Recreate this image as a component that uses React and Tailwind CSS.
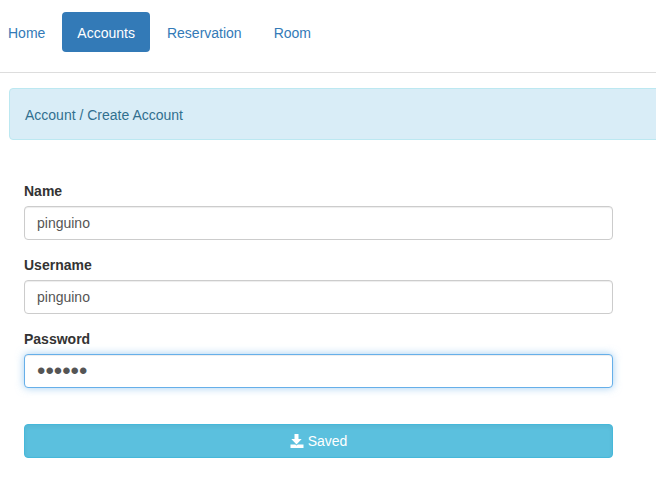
const nav = ['Home', 'Accounts', 'Reservation', 'Room'];

const fields = [
  { id: 'name', label: 'Name', type: 'text', value: 'pinguino' },
  { id: 'username', label: 'Username', type: 'text', value: 'pinguino' },
  { id: 'password', label: 'Password', type: 'password', value: 'secret' },
];

function Field({ id, label, type, value }) {
  return (
    <div className="mb-[15px]">
      <label htmlFor={id} className="mb-[5px] block font-bold">{label}</label>
      <input
        id={id}
        type={type}
        defaultValue={value}
        className={
          type === 'password'
            ? 'block h-[34px] w-full rounded border border-[#66afe9] bg-white px-3 text-2xl text-[#555] shadow-[inset_0_1px_1px_rgba(0,0,0,0.075),0_0_8px_rgba(102,175,233,0.6)] outline-none'
            : 'block h-[34px] w-full rounded border border-[#ccc] bg-white px-3 text-[#555] shadow-[inset_0_1px_1px_rgba(0,0,0,0.075)] outline-none'
        }
      />
    </div>
  );
}

export default function App() {
  return (
    <div className="overflow-x-hidden bg-white font-['Liberation_Sans',Arial,sans-serif] text-sm leading-5 text-[#333]">
      <nav className="flex gap-0.5 border-b border-[#ddd] pt-3 pb-5">
        {nav.map((item, i) => (
          <a
            key={item}
            href="#"
            className={
              item === 'Accounts'
                ? 'rounded bg-[#337ab7] px-[15px] pt-[11px] pb-[9px] text-white'
                : i === 0
                  ? 'pt-[11px] pr-[15px] pb-[9px] pl-2 text-[#337ab7]'
                  : 'px-[15px] pt-[11px] pb-[9px] text-[#337ab7]'
            }
          >
            {item}
          </a>
        ))}
      </nav>
      <div className="mt-[15px] -mr-2 ml-[9px] rounded border border-[#bce8f1] bg-[#d9edf7] px-[15px] pt-4 pb-3.5 text-[#31708f]">
        Account / Create Account
      </div>
      <form className="mt-[41px] mr-[43px] ml-6" onSubmit={(e) => e.preventDefault()}>
        {fields.map((f) => <Field key={f.id} {...f} />)}
        <button
          type="submit"
          className="mt-9 flex h-[34px] w-full items-center justify-center gap-1 rounded border border-[#46b8da] bg-[#5bc0de] text-white shadow-[inset_0_2px_4px_rgba(0,0,0,0.05)]"
        >
          <svg viewBox="0 0 14 14" className="size-3.5" fill="currentColor" aria-hidden="true">
            <path d="M4.500 0h4v5h3.200L6.500 10.500 1.300 5h3.200zM.5 10.500h4.800l1.200 1 1.200-1H13.500V14H.5z" />
          </svg>
          Saved
        </button>
      </form>
    </div>
  );
}
